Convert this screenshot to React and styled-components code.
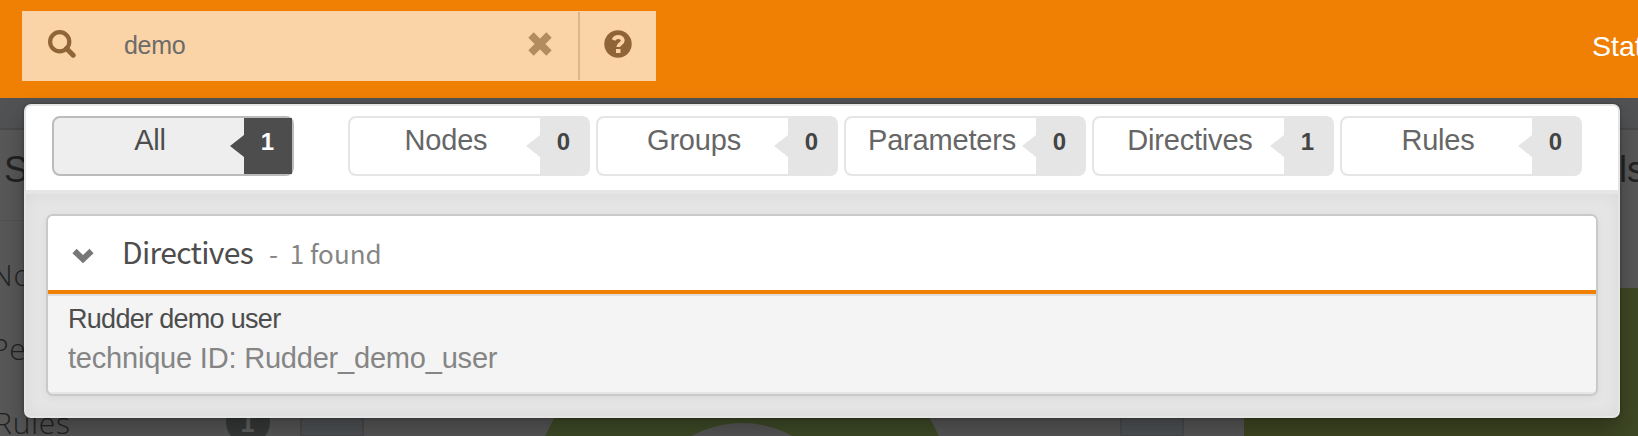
import React from 'react';
import styled, { createGlobalStyle, css } from 'styled-components';

const Global = createGlobalStyle`
  *{box-sizing:border-box}
  body{margin:0;background:#575757;font-family:"Liberation Sans",Arial,sans-serif;overflow:hidden}
`;
const Page = styled.div`position:relative;width:1638px;height:436px;overflow:hidden;background:#585858;`;
const Header = styled.header`height:98px;background:#f08004;display:flex;align-items:flex-start;justify-content:space-between;padding:11px 0 0 22px;`;
const Search = styled.div`display:flex;align-items:center;width:634px;height:70px;background:#fad3a6;color:#8f6538;`;
const SearchIcon = styled.svg`width:28px;height:28px;margin:0 0 4px 26px;flex:none;`;
const Query = styled.span`flex:1;margin:-3px 0 0 48px;font-size:25px;line-height:30px;color:#6b6b6b;letter-spacing:-.3px;`;
const ClearIcon = styled.svg`width:24px;height:24px;margin:0 26px 5px 0;flex:none;`;
const Help = styled.div`height:68px;width:78px;border-left:2px solid #dcb58a;display:flex;align-items:center;padding:0 0 4px 24px;`;
const HelpIcon = styled.svg`width:28px;height:28px;`;
const Status = styled.span`width:46px;overflow:hidden;white-space:nowrap;color:#fff;font-size:28.5px;line-height:32px;margin-top:19px;`;

const Backdrop = styled.div`position:absolute;left:0;top:98px;width:1638px;height:338px;`;
const Strip = styled.div`height:32px;background:#515254;border-bottom:2px solid #4a4a4a;`;
const BackArt = styled.svg`position:absolute;left:0;top:0;`;
const BackText = styled.span`
  position:absolute;white-space:nowrap;color:${p => p.$color || '#222'};left:${p => p.$x}px;top:${p => p.$y}px;line-height:40px;
  font-size:${p => p.$size || 30}px;
  ${p => p.$weight && css`font-family:"Noto Sans CJK SC","Noto Sans",sans-serif;font-weight:${p.$weight};`}
  ${p => p.$weight === 300 && css`font-family:"Open Sans","Noto Sans",sans-serif;letter-spacing:.8px;`}
`;

const Panel = styled.section`position:absolute;left:24px;top:104px;width:1596px;height:314px;border:2px solid #e5e5e5;border-radius:7px;background:#e5e5e5;box-shadow:0 12px 24px rgba(0,0,0,.3),0 0 3px rgba(0,0,0,.35);overflow:hidden;`;
const Filters = styled.nav`height:88px;padding:10px 0 0 26px;background:#fff;border-bottom:4px solid #e6e6e6;display:flex;gap:6px;`;
const Filter = styled.button`
  display:flex;width:242px;height:60px;padding:0;border:2px solid ${p => p.$active ? '#bbb' : '#e5e5e5'};border-radius:8px;
  background:${p => p.$active ? '#eee' : '#fff'};color:${p => p.$active ? '#4d4d4d' : '#666'};
  font:29px/32px "Liberation Sans",Arial,sans-serif;margin-right:${p => p.$active ? 48 : 0}px;
`;
const Label = styled.span`flex:1;text-align:center;padding:6px 0 0 2px;letter-spacing:-.2px;white-space:nowrap;`;
const Count = styled.span`
  position:relative;flex:none;width:48px;height:56px;background:${p => p.$active ? '#4d4d4d' : '#e5e5e5'};color:${p => p.$active ? '#fff' : '#444'};
  font-weight:700;font-size:24px;line-height:48px;text-align:center;padding-right:1px;
  &::before{content:"";position:absolute;left:-14px;top:17px;border:solid transparent;border-width:11px 14px 11px 0;border-right-color:${p => p.$active ? '#4d4d4d' : '#e5e5e5'};}
`;
const Results = styled.div`height:222px;padding:20px;box-shadow:inset 0 0 16px rgba(0,0,0,.05);`;
const Card = styled.article`height:182px;border:2px solid #c9c9c9;border-radius:7px;background:#f4f4f4;overflow:hidden;box-shadow:0 2px 10px rgba(0,0,0,.05);`;
const CardHead = styled.header`height:78px;background:#fff;border-bottom:4px solid #f08004;display:flex;align-items:center;font-family:"Noto Sans CJK SC","Noto Sans",sans-serif;`;
const Chevron = styled.svg`width:22px;height:16px;margin:5px 0 0 24px;flex:none;`;
const Title = styled.h2`margin:-4px 0 0 28px;font-size:30px;line-height:40px;font-weight:400;letter-spacing:-.65px;color:#4d4d4d;`;
const Found = styled.span`margin:0 0 0 16px;font-size:26px;line-height:40px;color:#858585;white-space:pre;`;
const Result = styled.div`height:100px;border-top:2px solid #ddd;border-bottom:2px solid #e6e6e6;padding:6px 20px;`;
const Name = styled.div`font-size:27px;line-height:34px;letter-spacing:-.7px;color:#4d4d4d;`;
const Detail = styled.div`font-size:29px;line-height:36px;letter-spacing:-.2px;margin-top:4px;color:#858585;`;

const filters = [['All', 1], ['Nodes', 0], ['Groups', 0], ['Parameters', 0], ['Directives', 1], ['Rules', 0]];

export default function App() {
  return (
    <Page>
      <Global />
      <Header>
        <Search>
          <SearchIcon viewBox="0 0 28 28"><circle cx="11.7" cy="11.7" r="9.6" fill="none" stroke="currentColor" strokeWidth="4.2" /><path d="M18.5 18.5l6.7 6.7" stroke="currentColor" strokeWidth="5" strokeLinecap="round" /></SearchIcon>
          <Query>demo</Query>
          <ClearIcon viewBox="0 0 24 24"><path d="M3 3l18 18M21 3L3 21" stroke="#b28b5f" strokeWidth="7.5" /></ClearIcon>
          <Help><HelpIcon viewBox="0 0 28 28"><circle cx="14" cy="14" r="13.7" fill="currentColor" /><path d="M9.5 10Q11 7 14.2 7C17 7 18.8 8.6 18.8 10.6C18.8 14.2 14.2 13.6 14.2 17" fill="none" stroke="#fad3a6" strokeWidth="3.8" /><path d="M12 19h4.5v4H12z" fill="#fad3a6" /></HelpIcon></Help>
        </Search>
        <Status>Status</Status>
      </Header>
      <Backdrop>
        <Strip />
        <BackArt width="1638" height="338">
          <path d="M0 122.5H24" stroke="#525252" />
          <path d="M301 300H363V338H301zM1121 300H1183V338H1121z" fill="#505356" stroke="#4b4b4b" strokeWidth="2" />
          <circle cx="742" cy="429" r="160.5" fill="none" stroke="#3f4c28" strokeWidth="113" />
          <path d="M1244 190H1638V338H1244z" fill="#3f4824" />
          <circle cx="248" cy="324" r="22" fill="#383a3a" />
        </BackArt>
        <BackText $x={4} $y={52} $size={36}>S</BackText>
        <BackText $x={1619} $y={52} $size={36}>ls</BackText>
        <BackText $weight={300} $x={-9} $y={157}>Nodes</BackText>
        <BackText $weight={300} $x={-9} $y={231}>Pending</BackText>
        <BackText $weight={300} $x={-6} $y={305}>Rules</BackText>
        <BackText $weight={700} $x={240} $y={303} $size={26} $color="#626262">1</BackText>
      </Backdrop>
      <Panel>
        <Filters>
          {filters.map(([name, count]) => (
            <Filter key={name} $active={name === 'All'}>
              <Label>{name}</Label><Count $active={name === 'All'}>{count}</Count>
            </Filter>
          ))}
        </Filters>
        <Results>
          <Card>
            <CardHead>
              <Chevron viewBox="0 0 22 16"><path d="M2.5 3L11 11.2L19.5 3" fill="none" stroke="#777" strokeWidth="6" /></Chevron>
              <Title>Directives</Title><Found>-  1 found</Found>
            </CardHead>
            <Result><Name>Rudder demo user</Name><Detail>technique ID: Rudder_demo_user</Detail></Result>
          </Card>
        </Results>
      </Panel>
    </Page>
  );
}
